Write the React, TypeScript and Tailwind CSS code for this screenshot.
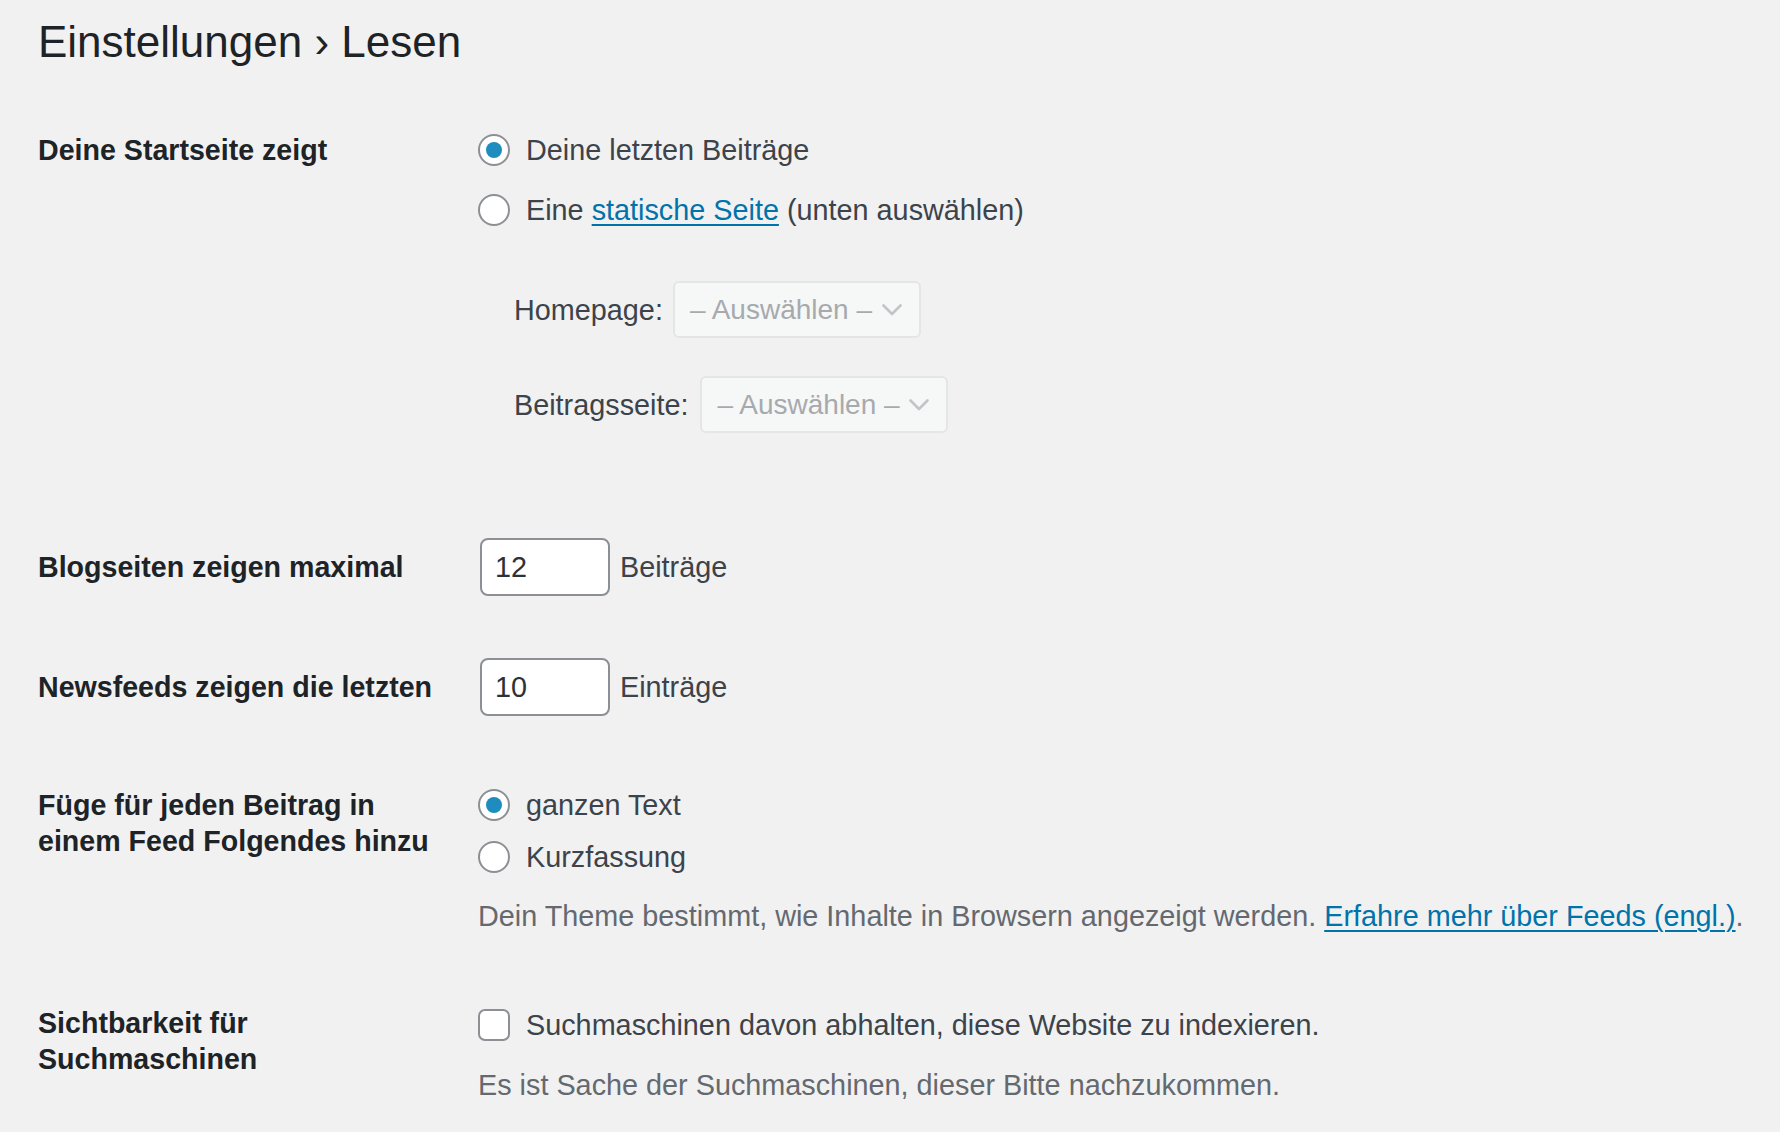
import React from "react";

function Radio({ checked }: { checked?: boolean }) {
  return (
    <span className="flex h-[32px] w-[32px] shrink-0 items-center justify-center rounded-full border-2 border-[#8c8f94] bg-white">
      {checked && <span className="h-[16px] w-[16px] rounded-full bg-[#1e8cbe]" />}
    </span>
  );
}

function FakeSelect({ width }: { width: string }) {
  return (
    <div
      className={`flex h-[57px] ${width} items-center justify-between rounded-[6px] border-2 border-[#e4e5e7] bg-[#f6f7f7] pl-[15px] pr-[17px] text-[28px] text-[#a7aaad]`}
    >
      <span>– Auswählen –</span>
      <svg width="20" height="12" viewBox="0 0 20 12" fill="none">
        <path d="M1.5 1.5 L10 10 L18.5 1.5" stroke="#c3c4c7" strokeWidth="2.6" strokeLinecap="round" strokeLinejoin="round" />
      </svg>
    </div>
  );
}

function NumberInput({ value }: { value: string }) {
  return (
    <div className="flex h-[58px] w-[130px] items-center rounded-[8px] border-2 border-[#8c8f94] bg-white pl-[13px] text-[#2c3338]">
      {value}
    </div>
  );
}

export default function App() {
  return (
    <div className="min-h-screen w-full bg-[#f1f1f1] pl-[38px] pt-[14px] font-['Liberation_Sans','Helvetica',Arial,sans-serif] text-[28.8px] leading-[36px] text-[#3c434a]">
      <h1 className="text-[44px] font-normal leading-[56px] text-[#1d2327]">Einstellungen › Lesen</h1>

      {/* Deine Startseite zeigt */}
      <div className="mt-[62px] flex items-start">
        <div className="w-[440px] shrink-0 text-[28.6px] font-bold text-[#1d2327]">Deine Startseite zeigt</div>
        <div className="flex flex-col">
          <label className="flex h-[36px] items-center gap-[16px]">
            <Radio checked />
            <span>Deine letzten Beiträge</span>
          </label>
          <label className="mt-[24px] flex h-[36px] items-center gap-[16px]">
            <Radio />
            <span>
              Eine{" "}
              <a className="text-[#0073aa] underline decoration-2 underline-offset-[4px]">statische Seite</a>{" "}
              (unten auswählen)
            </span>
          </label>
          <div className="mt-[53px] flex items-center gap-[10px] pl-[36px]">
            <span>Homepage:</span>
            <FakeSelect width="w-[248px]" />
          </div>
          <div className="mt-[38px] flex items-center gap-[12px] pl-[36px]">
            <span>Beitragsseite:</span>
            <FakeSelect width="w-[248px]" />
          </div>
        </div>
      </div>

      {/* Blogseiten zeigen maximal */}
      <div className="mt-[105px] flex items-center">
        <div className="w-[442px] shrink-0 text-[28.6px] font-bold text-[#1d2327]">Blogseiten zeigen maximal</div>
        <div className="flex items-center gap-[10px]">
          <NumberInput value="12" />
          <span>Beiträge</span>
        </div>
      </div>

      {/* Newsfeeds zeigen die letzten */}
      <div className="mt-[62px] flex items-center">
        <div className="w-[442px] shrink-0 text-[28.6px] font-bold text-[#1d2327]">Newsfeeds zeigen die letzten</div>
        <div className="flex items-center gap-[10px]">
          <NumberInput value="10" />
          <span>Einträge</span>
        </div>
      </div>

      {/* Füge für jeden Beitrag */}
      <div className="mt-[71px] flex items-start">
        <div className="w-[440px] shrink-0 text-[28.6px] font-bold text-[#1d2327]">
          Füge für jeden Beitrag in
          <br />
          einem Feed Folgendes hinzu
        </div>
        <div className="flex flex-col">
          <label className="flex h-[36px] items-center gap-[16px]">
            <Radio checked />
            <span>ganzen Text</span>
          </label>
          <label className="mt-[16px] flex h-[36px] items-center gap-[16px]">
            <Radio />
            <span>Kurzfassung</span>
          </label>
          <p className="mt-[23px] whitespace-nowrap text-[#646970]">
            Dein Theme bestimmt, wie Inhalte in Browsern angezeigt werden.{" "}
            <a className="text-[#0073aa] underline decoration-2 underline-offset-[4px]">Erfahre mehr über Feeds (engl.)</a>.
          </p>
        </div>
      </div>

      {/* Sichtbarkeit für Suchmaschinen */}
      <div className="mt-[71px] flex items-start">
        <div className="w-[440px] shrink-0 text-[28.6px] font-bold text-[#1d2327]">
          Sichtbarkeit für
          <br />
          Suchmaschinen
        </div>
        <div className="flex flex-col">
          <label className="mt-[2px] flex h-[36px] items-center gap-[16px]">
            <span className="h-[32px] w-[32px] shrink-0 rounded-[7px] border-2 border-[#8c8f94] bg-white" />
            <span>Suchmaschinen davon abhalten, diese Website zu indexieren.</span>
          </label>
          <p className="mt-[24px] text-[#646970]">Es ist Sache der Suchmaschinen, dieser Bitte nachzukommen.</p>
        </div>
      </div>
    </div>
  );
}
